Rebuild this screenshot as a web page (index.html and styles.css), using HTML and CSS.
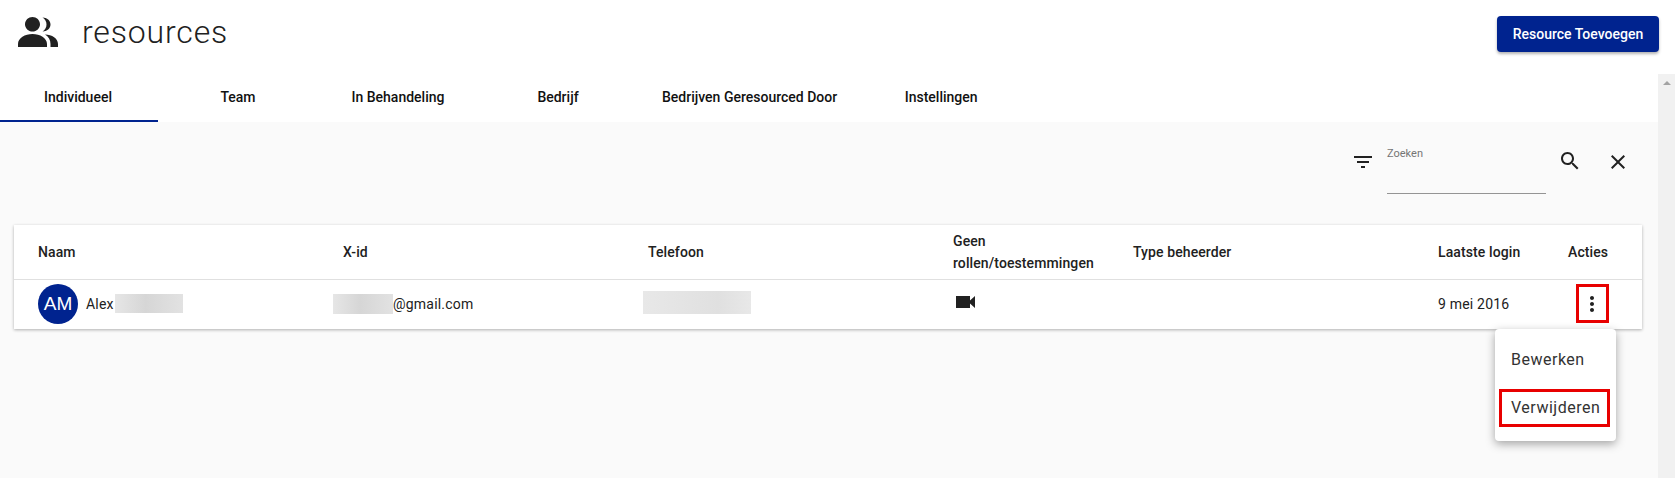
FILE: index.html
```html
<!DOCTYPE html>
<html lang="nl">
<head>
    <meta charset="UTF-8">
    <title>Resources</title>
    <link rel="stylesheet" href="styles.css">
</head>
<body>

    <header class="page-header">
        <div class="page-title">
            <svg class="title-icon" viewBox="0 0 40 30"><path d="M14.500 0C10.400 0 7 3.200 7 7.200s3.400 7.300 7.500 7.300S22 11.200 22 7.200 18.600 0 14.500 0zM0 30v-3c0-6 7-10 14.500-10S29 21 29 27v3zM24.500 .5c4.500 0 8 3 8 7s-3.500 7-8 7c2.500-1.500 4-4 4-7s-1.500-5.500-4-7zM27 17.500c7 0 13 4 13 9.500v3h-7.500v-3c0-4-2-7.500-5.500-9.500z"/></svg>
            <h1>resources</h1>
        </div>
        <button class="add-btn">Resource Toevoegen</button>
    </header>

    <div class="page-body">
        <main class="main">
            <nav class="tabs">
                <a class="tab active">Individueel</a>
                <a class="tab">Team</a>
                <a class="tab">In Behandeling</a>
                <a class="tab">Bedrijf</a>
                <a class="tab">Bedrijven Geresourced Door</a>
                <a class="tab">Instellingen</a>
            </nav>

            <div class="content">
                <div class="search-bar">
                    <svg class="icon filter-icon" viewBox="0 0 24 24"><path d="M10 18h4v-2h-4v2zM3 6v2h18V6H3zm3 7h12v-2H6v2z"/></svg>
                    <div class="search-field">
                        <label>Zoeken</label>
                    </div>
                    <svg class="icon search-icon" viewBox="0 0 24 24"><path d="M15.500 14h-.79l-.28-.27C15.410 12.590 16 11.110 16 9.500 16 5.910 13.090 3 9.500 3S3 5.910 3 9.500 5.910 16 9.500 16c1.610 0 3.090-.59 4.230-1.570l.27.28v.79l5 4.990L20.490 19l-4.990-5zm-6 0C7.010 14 5 11.990 5 9.500S7.010 5 9.500 5 14 7.010 14 9.500 11.990 14 9.500 14z"/></svg>
                    <svg class="icon close-icon" viewBox="0 0 24 24"><path d="M19 6.410L17.590 5 12 10.590 6.410 5 5 6.410 10.590 12 5 17.590 6.410 19 12 13.410 17.590 19 19 17.590 13.410 12z"/></svg>
                </div>

                <div class="card">
                    <div class="table-row table-head">
                        <div>Naam</div>
                        <div>X-id</div>
                        <div>Telefoon</div>
                        <div class="wrap-cell">Geen rollen/toestemmingen</div>
                        <div>Type beheerder</div>
                        <div>Laatste login</div>
                        <div>Acties</div>
                    </div>
                    <div class="table-row table-data">
                        <div class="name-cell">
                            <span class="avatar">AM</span>
                            <span>Alex</span>
                            <span class="blur blur-name"></span>
                        </div>
                        <div class="email-cell">
                            <span class="blur blur-email"></span>
                            <span>@gmail.com</span>
                        </div>
                        <div class="phone-cell">
                            <span class="blur blur-phone"></span>
                        </div>
                        <div class="video-cell">
                            <svg class="video-icon" viewBox="0 0 19 12"><path d="M0 0h14v4.500L19 0v12l-5-4.500V12H0z"/></svg>
                        </div>
                        <div></div>
                        <div>9 mei 2016</div>
                        <div class="action-cell">
                            <button class="more-btn">
                                <svg viewBox="0 0 24 24"><path d="M11 8c1.100 0 2-.9 2-2s-.9-2-2-2-2 .9-2 2 .9 2 2 2zm0 2c-1.100 0-2 .9-2 2s.9 2 2 2 2-.9 2-2-.9-2-2-2zm0 6c-1.100 0-2 .9-2 2s.9 2 2 2 2-.9 2-2-.9-2-2-2z"/></svg>
                            </button>
                        </div>
                    </div>
                </div>

                <ul class="menu">
                    <li>Bewerken</li>
                    <li class="marked">Verwijderen</li>
                </ul>
            </div>
        </main>

        <aside class="scrollbar"><span class="scroll-arrow"></span></aside>
    </div>

</body>
</html>
```

FILE: styles.css
```css
html, body {
    height: 100%;
}

body {
    margin: 0;
    display: flex;
    flex-direction: column;
    overflow: hidden;
    background-color: #fff;
    color: #212121;
    font-family: 'Roboto', sans-serif;
    font-size: 14px;
}

/* Header */
.page-header {
    height: 74px;
    flex: none;
    display: flex;
    justify-content: space-between;
    align-items: flex-start;
    padding: 16px 16px 0 18px;
    box-sizing: border-box;
}

.page-title {
    display: flex;
    align-items: center;
    gap: 24px;
    height: 32px;
}

.title-icon {
    width: 40px;
    height: 30px;
    fill: #212121;
}

.page-title h1 {
    margin: 0;
    font-size: 32px;
    font-weight: 300;
    line-height: 32px;
    letter-spacing: 0.85px;
}

.add-btn {
    width: 162px;
    height: 36px;
    padding: 0;
    border: none;
    border-radius: 4px;
    background-color: #00238f;
    color: #fff;
    font-family: inherit;
    font-size: 14px;
    font-weight: 500;
    box-shadow: 0 2px 3px rgba(0, 0, 0, 0.3);
}

/* Layout below header */
.page-body {
    flex: 1;
    display: flex;
    min-height: 0;
}

.main {
    flex: 1;
    display: flex;
    flex-direction: column;
    min-width: 0;
}

.scrollbar {
    width: 17px;
    background-color: #f1f1f1;
    display: flex;
    justify-content: center;
    padding-top: 7px;
    box-sizing: border-box;
}

.scroll-arrow {
    width: 0;
    height: 0;
    border-left: 4px solid transparent;
    border-right: 4px solid transparent;
    border-bottom: 4px solid #a3a3a3;
}

/* Tabs */
.tabs {
    height: 48px;
    flex: none;
    display: flex;
}

.tab {
    min-width: 160px;
    padding: 0 24px;
    box-sizing: border-box;
    border-bottom: 2px solid transparent;
    display: flex;
    align-items: center;
    justify-content: center;
    color: #111;
    font-size: 14px;
    font-weight: 500;
}

.tab.active {
    border-bottom-color: #00238f;
    width: 158px;
    min-width: 158px;
    padding: 0 2px 0 0;
}

/* Content */
.content {
    flex: 1;
    position: relative;
    background-color: #fafafa;
    padding: 0 16px 0 14px;
}

.search-bar {
    height: 103px;
    display: flex;
    align-items: flex-start;
}

.icon {
    width: 24px;
    height: 24px;
    fill: #212121;
    flex: none;
}

.filter-icon {
    margin: 28px 12px 0 auto;
}

.search-field {
    width: 159px;
    height: 72px;
    margin-right: 12px;
    border-bottom: 1px solid #949494;
    box-sizing: border-box;
}

.search-field label {
    display: block;
    margin-top: 25px;
    color: #757575;
    font-size: 11px;
    line-height: 13px;
}

.search-icon {
    margin: 27px 24px 0 0;
}

.close-icon {
    margin: 28px 12px 0 0;
}

.card {
    background-color: #fff;
    box-shadow: 0 1px 3px rgba(0, 0, 0, 0.3);
}

.table-row {
    display: grid;
    grid-template-columns: 305px 305px 305px 180px 305px 130px 1fr;
    padding-left: 24px;
    align-items: center;
}

.table-head {
    height: 54px;
    border-bottom: 1px solid #e0e0e0;
    font-weight: 500;
    line-height: 22px;
    letter-spacing: 0.1px;
}

.wrap-cell {
    max-width: 140px;
}

.table-data {
    height: 49px;
    padding-bottom: 2px;
    box-sizing: border-box;
    letter-spacing: 0.2px;
}

.name-cell {
    display: flex;
    align-items: center;
}

.avatar {
    width: 40px;
    height: 40px;
    margin-right: 8px;
    border-radius: 50%;
    background-color: #00238f;
    color: #fff;
    font-family: 'Liberation Sans', sans-serif;
    font-size: 19px;
    line-height: 40px;
    text-align: center;
    letter-spacing: 0;
}

.blur {
    display: block;
    background: linear-gradient(90deg, #e6e6e6, #d6d6d6 45%, #e2e2e2);
}

.blur-name {
    width: 68px;
    height: 19px;
    margin-left: 1px;
}

.email-cell {
    display: flex;
    align-items: center;
    margin-left: -10px;
}

.blur-email {
    width: 60px;
    height: 20px;
}

.phone-cell {
    margin-left: -5px;
}

.blur-phone {
    width: 108px;
    height: 23px;
    margin-bottom: 2px;
    background: linear-gradient(90deg, #e8e8e8, #e0e0e0 70%, #e8e8e8);
}

.video-cell {
    padding: 0 0 3px 3px;
}

.video-icon {
    display: block;
    width: 19px;
    height: 12px;
    fill: #212121;
}

.action-cell {
    padding-left: 8px;
}

.more-btn {
    display: block;
    width: 33px;
    height: 39px;
    padding: 0;
    border: 3px solid #e80000;
    background: none;
    box-sizing: border-box;
}

.more-btn svg {
    display: block;
    width: 24px;
    height: 24px;
    margin: auto;
    fill: #212121;
}

/* Popup menu */
.menu {
    position: absolute;
    top: 207px;
    right: 42px;
    width: 121px;
    height: 112px;
    margin: 0;
    padding: 8px 6px 0 4px;
    box-sizing: border-box;
    list-style: none;
    background-color: #fff;
    border-radius: 4px;
    box-shadow: 0 3px 10px rgba(0, 0, 0, 0.35);
    color: #333;
    font-size: 16px;
    letter-spacing: 0.5px;
}

.menu li {
    height: 38px;
    line-height: 38px;
    padding-left: 12px;
}

.menu li:first-child {
    margin-top: 4px;
}

.menu li.marked {
    margin-top: 10px;
    outline: 3px solid #e80000;
    outline-offset: -3px;
}
```
